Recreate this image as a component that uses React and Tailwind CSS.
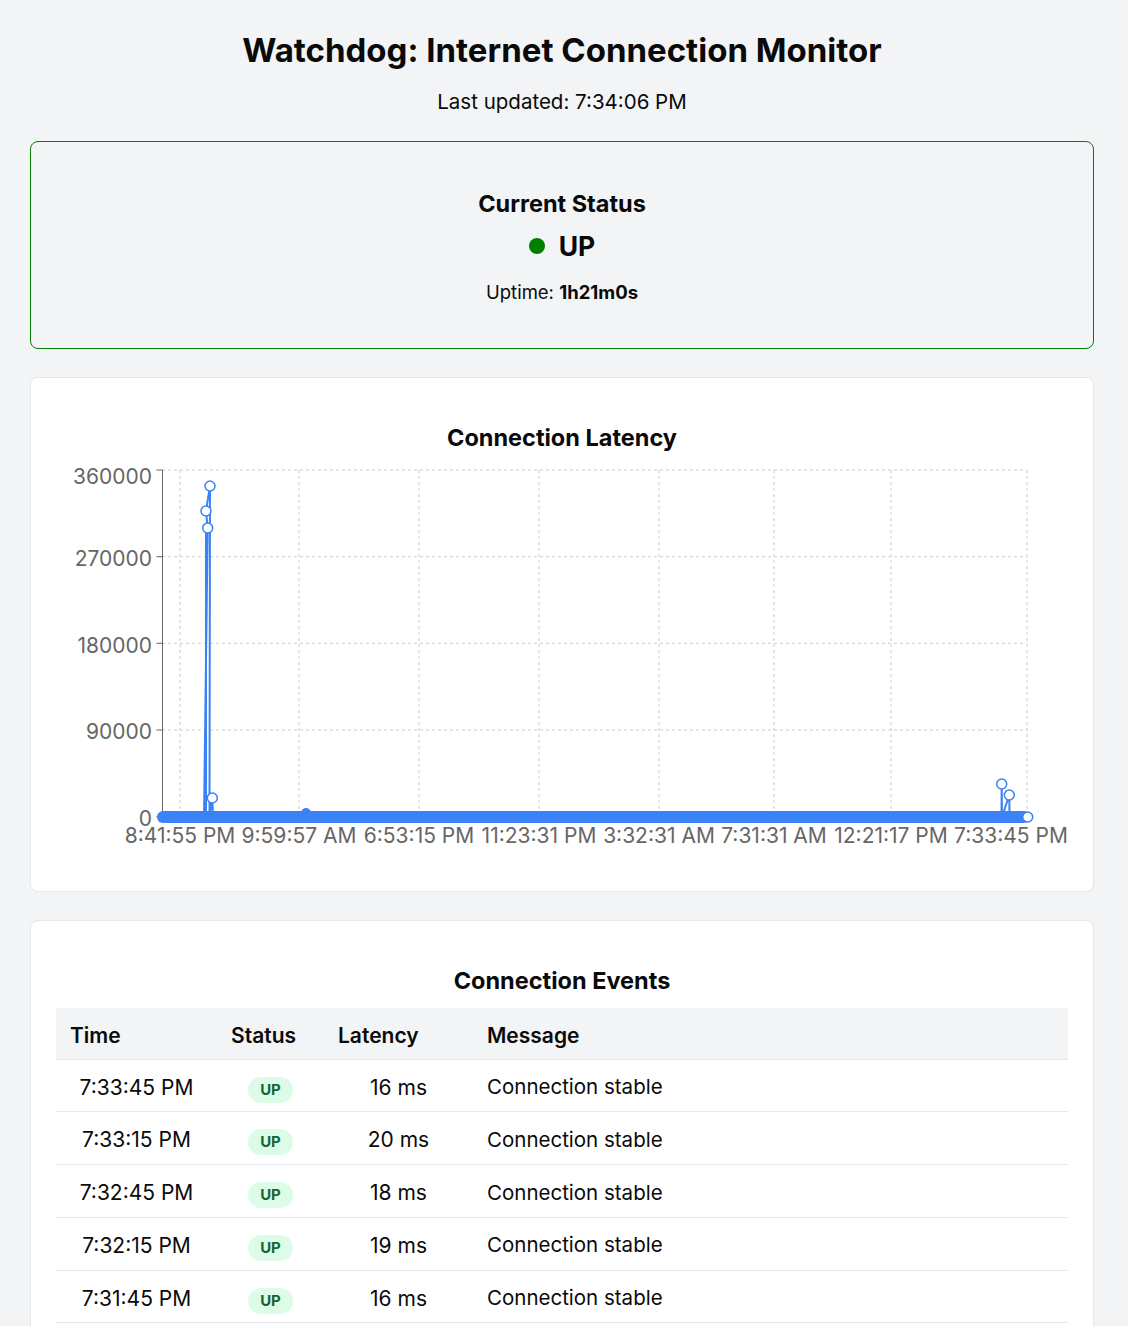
import React from "react";

const events = [
  { time: "7:33:45 PM", status: "UP", latency: "16 ms", message: "Connection stable" },
  { time: "7:33:15 PM", status: "UP", latency: "20 ms", message: "Connection stable" },
  { time: "7:32:45 PM", status: "UP", latency: "18 ms", message: "Connection stable" },
  { time: "7:32:15 PM", status: "UP", latency: "19 ms", message: "Connection stable" },
  { time: "7:31:45 PM", status: "UP", latency: "16 ms", message: "Connection stable" },
  { time: "7:31:15 PM", status: "UP", latency: "17 ms", message: "Connection stable" },
  { time: "7:30:45 PM", status: "UP", latency: "18 ms", message: "Connection stable" },
];

const yTicks = [
  { label: "360000", y: 470, ty: 476 },
  { label: "270000", y: 556.7, ty: 558.5 },
  { label: "180000", y: 643.3, ty: 645 },
  { label: "90000", y: 730, ty: 731.5 },
  { label: "0", y: 816.7, ty: 818.5 },
];

const xTicks = [
  { label: "8:41:55 PM", x: 180, tx: 180 },
  { label: "9:59:57 AM", x: 299, tx: 299 },
  { label: "6:53:15 PM", x: 419, tx: 419 },
  { label: "11:23:31 PM", x: 539, tx: 539 },
  { label: "3:32:31 AM", x: 659, tx: 659 },
  { label: "7:31:31 AM", x: 774, tx: 774 },
  { label: "12:21:17 PM", x: 891, tx: 891 },
  { label: "7:33:45 PM", x: 1027, tx: 1011 },
];

const dots = [
  [210, 486],
  [206, 511],
  [207.7, 528],
  [212.3, 798],
  [1001.7, 784],
  [1009.3, 795],
  [1027.7, 817],
];

const axisFont = "Inter, 'Liberation Sans', sans-serif";

// chart is drawn in page coordinates, shifted into the card
const LatencyChart = () => (
  <svg width="1062" height="400" className="block">
    <g transform="translate(-31,-452)">
      {/* grid */}
      {yTicks.slice(0, 4).map((t) => (
        <line
          key={t.label}
          x1="162"
          x2="1027"
          y1={t.y}
          y2={t.y}
          stroke="#ccc"
          strokeDasharray="3 3"
        />
      ))}
      {xTicks.map((t) => (
        <line
          key={t.label}
          x1={t.x}
          x2={t.x}
          y1="470"
          y2="817"
          stroke="#ccc"
          strokeDasharray="3 3"
        />
      ))}

      {/* y axis */}
      <line x1="162.5" x2="162.5" y1="470" y2="817" stroke="#666" />
      {yTicks.map((t) => (
        <g key={t.label}>
          <line x1="156.5" x2="162.5" y1={t.y} y2={t.y} stroke="#666" />
          <text
            x="152"
            y={t.ty}
            dy="0.36em"
            textAnchor="end"
            fill="#666"
            fontSize="21"
            fontFamily={axisFont}
          >
            {t.label}
          </text>
        </g>
      ))}

      {/* x labels */}
      {xTicks.map((t) => (
        <text
          key={t.label}
          x={t.tx}
          y="835.5"
          dy="0.36em"
          textAnchor="middle"
          fill="#666"
          fontSize="21"
          fontFamily={axisFont}
        >
          {t.label}
        </text>
      ))}

      {/* data */}
      <line
        x1="163"
        x2="1024"
        y1="817"
        y2="817"
        stroke="#3b82f6"
        strokeWidth="12"
        strokeLinecap="round"
      />
      <circle cx="306" cy="813" r="5" fill="#3b82f6" />
      <polyline
        points="204,817 207.7,528 206,511 210,486 209.5,817 212.3,798 213,817"
        fill="none"
        stroke="#3b82f6"
        strokeWidth="2"
      />
      <line x1="206" x2="206" y1="528" y2="817" stroke="#3b82f6" strokeWidth="2" />
      <polyline
        points="1001.5,817 1001.7,784 1002,817 1009.3,795 1009.5,817"
        fill="none"
        stroke="#3b82f6"
        strokeWidth="2"
      />
      {dots.map(([cx, cy], i) => (
        <circle
          key={i}
          cx={cx}
          cy={cy}
          r="5"
          fill="#fff"
          stroke="#3b82f6"
          strokeWidth="1.5"
        />
      ))}
    </g>
  </svg>
);

const App = () => {
  return (
    <div
      className="min-h-screen bg-[#f3f4f6] text-[#0a0a0a]"
      style={{ fontFamily: "Inter, 'Liberation Sans', sans-serif" }}
    >
      <div className="w-[1064px] ml-[30px] pt-[30px] pb-10">
        {/* Header */}
        <h1 className="text-center text-[33px] leading-[40px] font-bold">
          Watchdog: Internet Connection Monitor
        </h1>
        <p className="mt-[18px] text-center text-[20.5px] leading-[27px]">
          Last updated: 7:34:06 PM
        </p>

        {/* Current status */}
        <div className="mt-[26px] rounded-lg border border-[#008000] pt-[48px] pb-[44px] text-center">
          <h2 className="text-[23.5px] leading-[28px] font-bold">Current Status</h2>
          <div className="mt-3 flex items-center justify-center gap-[14px]">
            <span className="h-4 w-4 rounded-full bg-[#008000]" />
            <span className="text-[26.5px] leading-[32px] font-bold">UP</span>
          </div>
          <p className="mt-[18px] text-[18.5px] leading-[24px]">
            Uptime: <span className="font-bold">1h21m0s</span>
          </p>
        </div>

        {/* Latency chart */}
        <div className="mt-[28px] rounded-lg border border-gray-200 bg-white pt-[46px] pb-[39px]">
          <h2 className="text-center text-[23.5px] leading-[28px] font-bold">
            Connection Latency
          </h2>
          <LatencyChart />
        </div>

        {/* Events table */}
        <div className="mt-[28px] rounded-lg border border-gray-200 bg-white pt-[46px] px-[25px] pb-8">
          <h2 className="text-center text-[23.5px] leading-[28px] font-bold">
            Connection Events
          </h2>
          <table className="mt-[13px] w-full border-collapse text-[21px]">
            <colgroup>
              <col className="w-[161px]" />
              <col className="w-[107px]" />
              <col className="w-[149px]" />
              <col />
            </colgroup>
            <thead>
              <tr className="h-[51px] bg-[#f3f4f6] border-b border-gray-200">
                <th className="pl-[14px] pt-[4px] text-left font-semibold">Time</th>
                <th className="pl-[14px] pt-[4px] text-left font-semibold">Status</th>
                <th className="pl-[14px] pt-[4px] text-left font-semibold">Latency</th>
                <th className="pl-[14px] pt-[4px] text-left font-semibold">Message</th>
              </tr>
            </thead>
            <tbody>
              {events.map((e, i) => (
                <tr key={i} className="h-[52.8px] border-b border-gray-200">
                  <td className="pt-[4px] text-center">{e.time}</td>
                  <td className="pt-[4px] text-center">
                    <span className="inline-block rounded-full bg-[#dcfce7] px-3 py-[3px] text-[15px] leading-[20px] font-bold text-[#166534]">
                      {e.status}
                    </span>
                  </td>
                  <td className="pt-[4px] text-center">{e.latency}</td>
                  <td className="pl-[14px] pt-[4px] text-left text-[20.5px]">{e.message}</td>
                </tr>
              ))}
            </tbody>
          </table>
        </div>
      </div>
    </div>
  );
};

export default App;
